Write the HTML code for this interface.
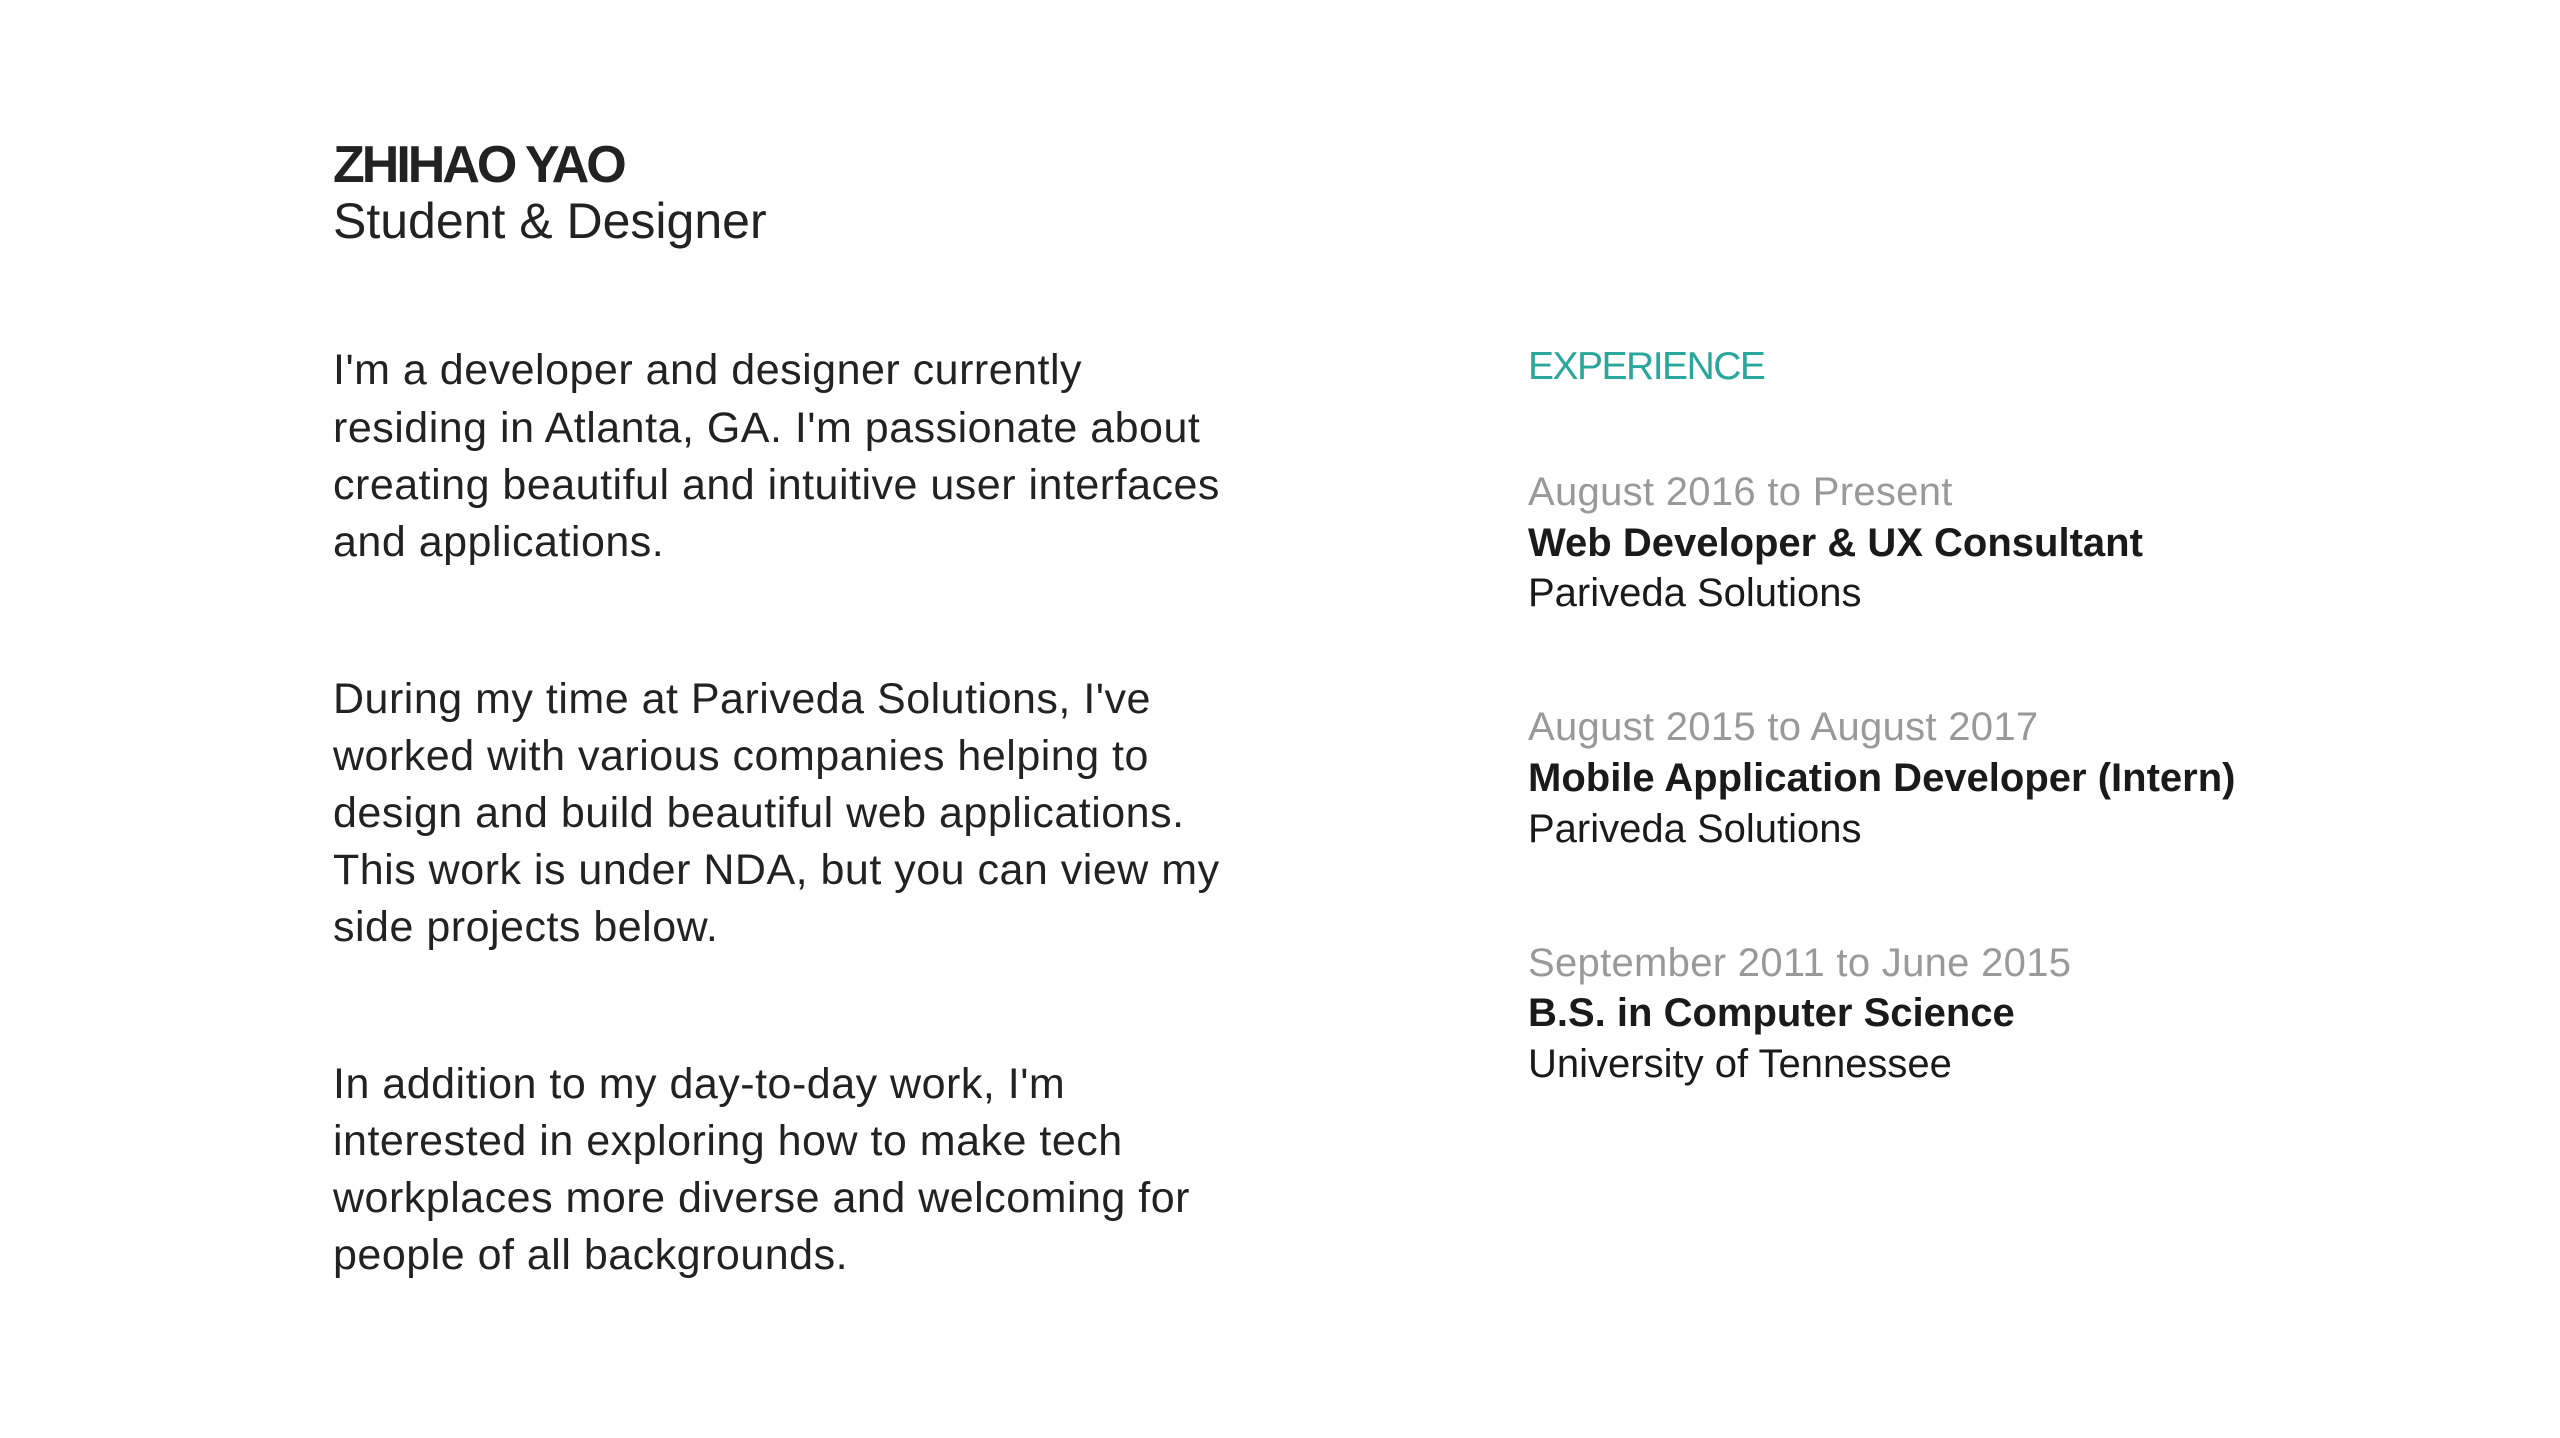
<!DOCTYPE html>
<html><head><meta charset="utf-8"><style>
html,body{margin:0;padding:0;background:#fff;}
body{width:2560px;height:1438px;position:relative;overflow:hidden;font-family:"Liberation Sans",sans-serif;}
.l{position:absolute;white-space:nowrap;line-height:1;}
.p{left:333px;font-size:43px;color:#222;letter-spacing:0.5px;}
.r{left:1528px;font-size:40px;}
.d{color:#999;letter-spacing:0.3px;}
.t{color:#1a1a1a;font-weight:bold;letter-spacing:0px;}
.c{color:#1a1a1a;letter-spacing:0px;}
</style></head><body>
<div class="l" style="left:333px;top:139px;font-size:52px;font-weight:bold;color:#222;letter-spacing:-3px;">ZHIHAO YAO</div>
<div class="l" style="left:333px;top:196px;font-size:50px;color:#222;">Student &amp; Designer</div>

<div class="l p" style="top:349px">I'm a developer and designer currently</div>
<div class="l p" style="top:407px">residing in Atlanta, GA. I'm passionate about</div>
<div class="l p" style="top:464px">creating beautiful and intuitive user interfaces</div>
<div class="l p" style="top:521px">and applications.</div>

<div class="l p" style="top:678px">During my time at Pariveda Solutions, I've</div>
<div class="l p" style="top:735px">worked with various companies helping to</div>
<div class="l p" style="top:792px">design and build beautiful web applications.</div>
<div class="l p" style="top:849px">This work is under NDA, but you can view my</div>
<div class="l p" style="top:906px">side projects below.</div>

<div class="l p" style="top:1063px">In addition to my day-to-day work, I'm</div>
<div class="l p" style="top:1120px">interested in exploring how to make tech</div>
<div class="l p" style="top:1177px">workplaces more diverse and welcoming for</div>
<div class="l p" style="top:1234px">people of all backgrounds.</div>

<div class="l r" style="top:347px;color:#2aa79b;font-size:39px;letter-spacing:-1.5px;">EXPERIENCE</div>

<div class="l r d" style="top:472px">August 2016 to Present</div>
<div class="l r t" style="top:523px">Web Developer &amp; UX Consultant</div>
<div class="l r c" style="top:573px">Pariveda Solutions</div>

<div class="l r d" style="top:707px">August 2015 to August 2017</div>
<div class="l r t" style="top:758px">Mobile Application Developer (Intern)</div>
<div class="l r c" style="top:809px">Pariveda Solutions</div>

<div class="l r d" style="top:943px">September 2011 to June 2015</div>
<div class="l r t" style="top:993px">B.S. in Computer Science</div>
<div class="l r c" style="top:1044px">University of Tennessee</div>
</body></html>
